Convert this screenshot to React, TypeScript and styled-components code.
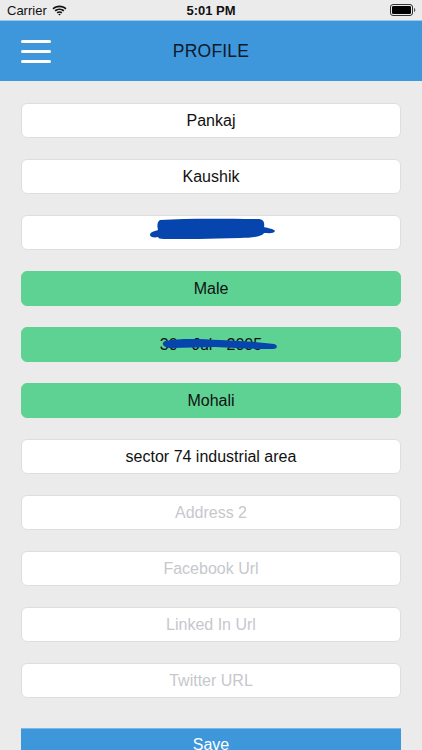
import React from "react";
import styled, { createGlobalStyle } from "styled-components";

const GlobalStyle = createGlobalStyle`
  html, body {
    margin: 0;
    padding: 0;
    background: #ebebeb;
  }
  body {
    font-family: "Liberation Sans", Arial, sans-serif;
  }
`;

const Screen = styled.div`
  width: 422px;
  height: 750px;
  overflow: hidden;
  background: #ebebeb;
  display: flex;
  flex-direction: column;
  & > * {
    flex-shrink: 0;
  }
`;

const StatusBar = styled.div`
  height: 20px;
  display: flex;
  align-items: center;
  justify-content: space-between;
  padding: 0 6px 0 7px;
  font-size: 13px;
  color: #111;
  position: relative;

  .left {
    display: flex;
    align-items: center;
    gap: 5px;
  }
  .time {
    position: absolute;
    left: 0;
    right: 0;
    text-align: center;
    font-weight: bold;
    pointer-events: none;
  }
`;

const Header = styled.div`
  height: 61px;
  background: #3d97da;
  display: flex;
  align-items: center;
  position: relative;
  border-top: 1px solid #9cc8ea;
  box-sizing: border-box;

  .title {
    position: absolute;
    left: 0;
    right: 0;
    text-align: center;
    font-size: 17.5px;
    color: #0d1a2a;
    letter-spacing: 0.2px;
  }
`;

const MenuButton = styled.div`
  margin-left: 21px;
  width: 30px;
  display: flex;
  flex-direction: column;
  gap: 7px;
  span {
    display: block;
    height: 3px;
    border-radius: 2px;
    background: #fff;
  }
`;

const Form = styled.div`
  display: flex;
  flex-direction: column;
  gap: 21px;
  padding: 22px 21px 0;
`;

const Field = styled.div<{ $green?: boolean; $placeholder?: boolean }>`
  position: relative;
  flex-shrink: 0;
  height: 35px;
  box-sizing: border-box;
  border-radius: 6px;
  border: 1px solid ${(p) => (p.$green ? "#5dd293" : "#dedede")};
  background: ${(p) => (p.$green ? "#5dd293" : "#ffffff")};
  display: flex;
  align-items: center;
  justify-content: center;
  font-size: 16px;
  color: ${(p) => (p.$placeholder ? "#c7c7cd" : "#111")};
`;

const Scribble = styled.svg`
  position: absolute;
  pointer-events: none;
`;

const SaveButton = styled.div`
  margin: 30px 21px 0;
  height: 40px;
  background: #3d97da;
  border-top: 1px solid #7bb9e6;
  display: flex;
  justify-content: center;
  padding-top: 7px;
  box-sizing: border-box;
  color: #fff;
  font-size: 16px;
`;

const Wifi = () => (
  <svg width="15" height="11" viewBox="0 0 15 11">
    <path d="M7.5 2.2c2.3 0 4.3.9 5.9 2.3l1.1-1.2C12.7 1.6 10.2.6 7.5.6S2.3 1.6.5 3.3l1.1 1.2C3.2 3.1 5.2 2.2 7.5 2.2z" fill="#111" />
    <path d="M7.5 5c1.5 0 2.8.6 3.8 1.5l1.1-1.2C11.1 4.1 9.4 3.4 7.5 3.4S3.9 4.1 2.6 5.3l1.1 1.2C4.7 5.6 6 5 7.5 5z" fill="#111" />
    <path d="M7.5 7.8c.7 0 1.3.3 1.8.7l1.1-1.2C9.6 6.6 8.6 6.2 7.5 6.2s-2.1.4-2.9 1.1l1.1 1.2c.5-.4 1.1-.7 1.8-.7z" fill="#111" />
    <path d="M7.5 10.6l1.3-1.4c-.3-.3-.8-.5-1.3-.5s-1 .2-1.3.5z" fill="#111" />
  </svg>
);

const Battery = () => (
  <svg width="26" height="12" viewBox="0 0 26 12">
    <rect x="0.5" y="0.5" width="22" height="11" rx="2.5" fill="none" stroke="#333" />
    <rect x="2" y="2" width="19" height="8" rx="1.2" fill="#000" />
    <path d="M24 4v4c.8-.3 1.3-1 1.3-2s-.5-1.7-1.3-2z" fill="#555" />
  </svg>
);

const fields = [
  { value: "Pankaj" },
  { value: "Kaushik" },
  { value: "", redact: "email" },
  { value: "Male", green: true },
  { value: "30 - Jul - 2005", green: true, redact: "date" },
  { value: "Mohali", green: true },
  { value: "sector 74 industrial area" },
  { value: "Address 2", placeholder: true },
  { value: "Facebook Url", placeholder: true },
  { value: "Linked In Url", placeholder: true },
  { value: "Twitter URL", placeholder: true },
];

const App: React.FC = () => {
  return (
    <>
      <GlobalStyle />
      <Screen>
        <StatusBar>
          <div className="left">
            <span>Carrier</span>
            <Wifi />
          </div>
          <div className="time">5:01 PM</div>
          <Battery />
        </StatusBar>
        <Header>
          <MenuButton>
            <span />
            <span />
            <span />
          </MenuButton>
          <div className="title">PROFILE</div>
        </Header>
        <Form>
          {fields.map((f, i) => (
            <Field key={i} $green={f.green} $placeholder={f.placeholder}>
              {f.value}
              {f.redact === "email" && (
                <Scribble width="126" height="22" viewBox="0 0 126 22" style={{ left: 128, top: 2 }}>
                  <path
                    d="M10 2 C40 0 80 1 108 1 C113 1 115 4 114 9 C118 10 124 11 125 13 C124 16 118 15 114 15 C112 19 100 20 90 20 C60 21 35 21 14 21 C10 21 8 20 8 19 C4 20 0 19 0 17 C0 14 5 13 8 12 C7 8 7 4 10 2 Z"
                    fill="#0645ad"
                  />
                </Scribble>
              )}
              {f.redact === "date" && (
                <Scribble width="120" height="14" viewBox="0 0 120 14" style={{ left: 138, top: 9 }}>
                  <path
                    d="M6 4 C20 1 40 2 60 3 C80 4 100 5 114 7 C118 8 118 12 113 12 C95 12 75 11 55 10 C40 10 25 11 12 11 C6 11 3 9 3 7 C3 5 4 4 6 4 Z"
                    fill="#0645ad"
                  />
                </Scribble>
              )}
            </Field>
          ))}
        </Form>
        <SaveButton>Save</SaveButton>
      </Screen>
    </>
  );
};

export default App;
